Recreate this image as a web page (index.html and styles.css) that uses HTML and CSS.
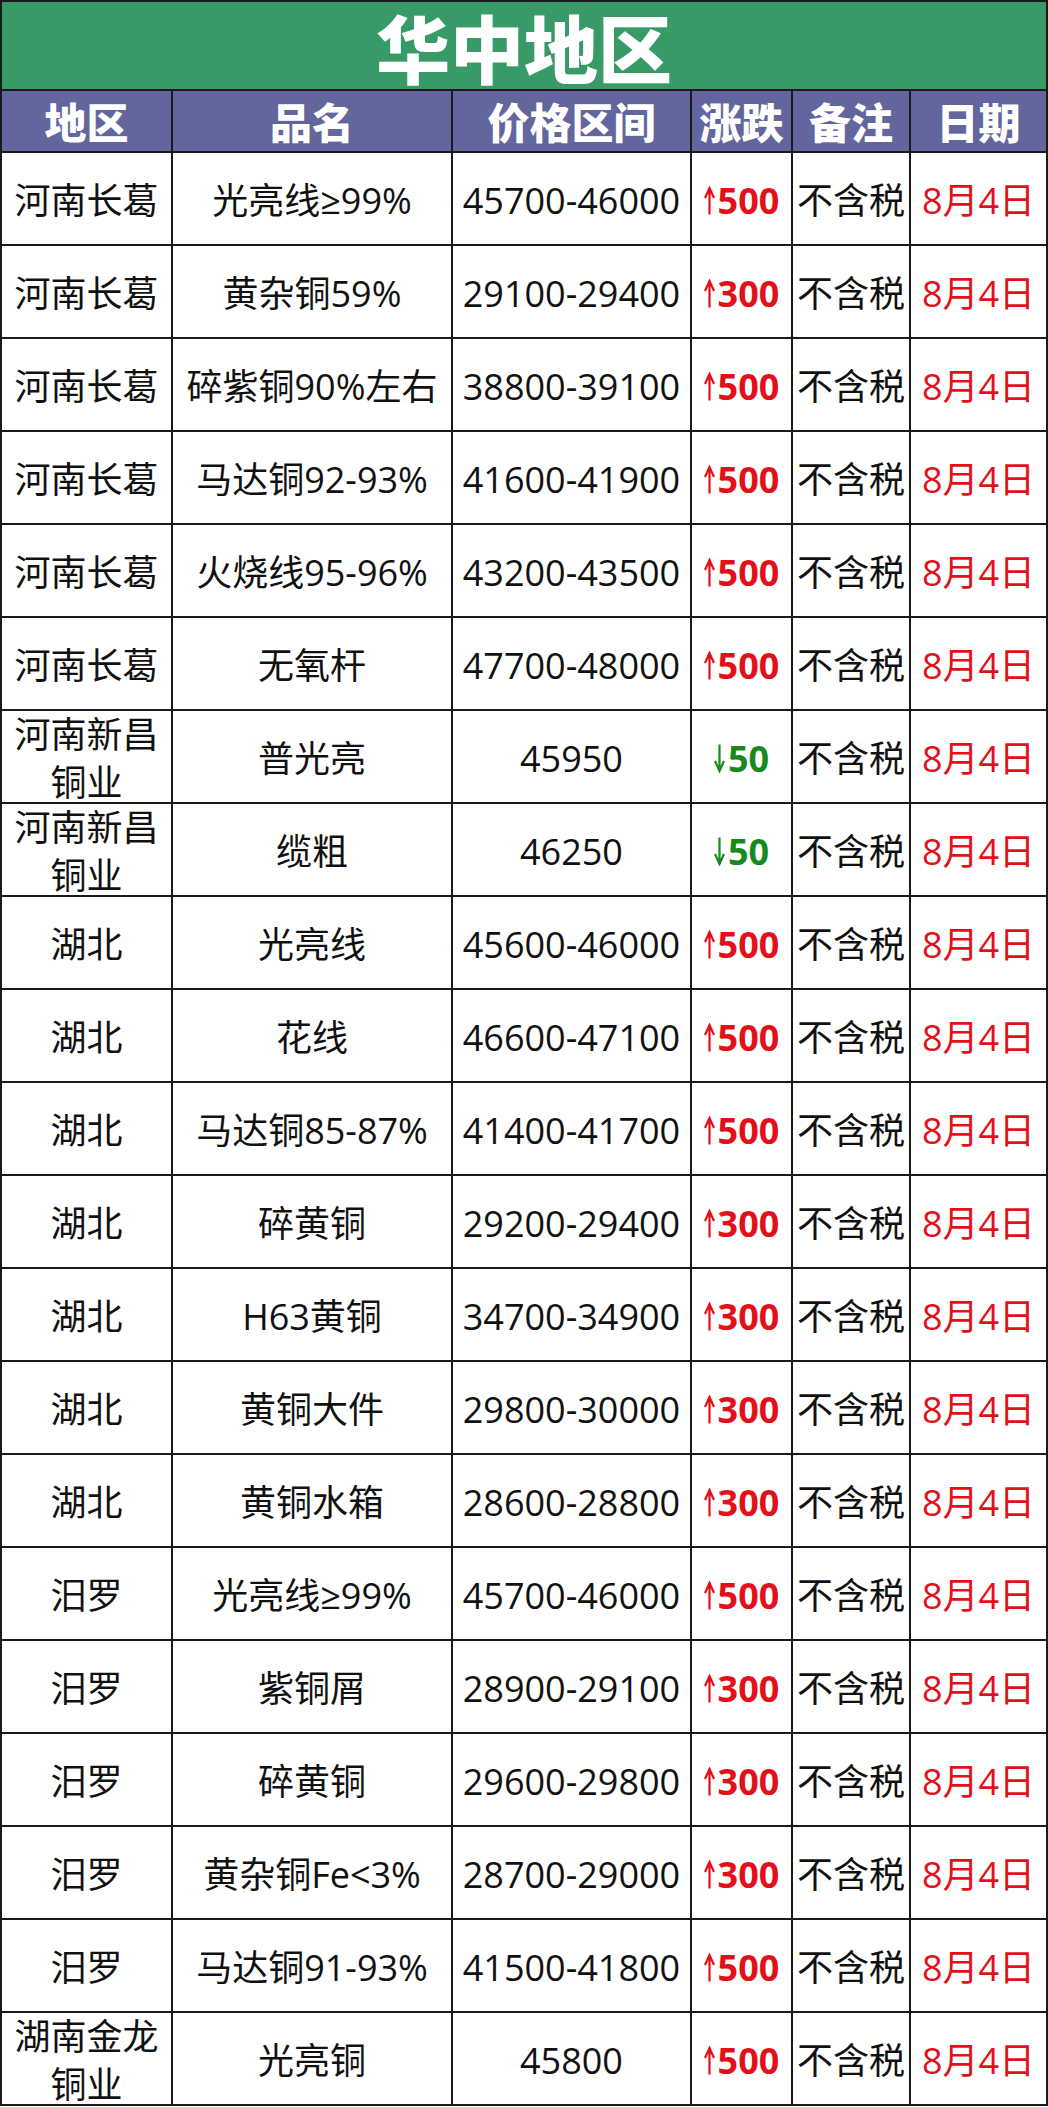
FILE: index.html
```html
<!DOCTYPE html>
<html lang="zh-CN">
<head>
<meta charset="utf-8">
<title>华中地区</title>
<link rel="stylesheet" href="styles.css">
</head>
<body>
<svg width="0" height="0" class="defs" aria-hidden="true">
  <defs>
    <symbol id="up" viewBox="0 0 11 29"><path d="M5.5 28.5V3.5M1 12L5.5 2L10 12" fill="none" stroke="currentColor" stroke-width="2.2" stroke-linejoin="miter"/></symbol>
    <symbol id="down" viewBox="0 0 11 29"><path d="M5.5 0.5V25.5M1 17L5.5 27L10 17" fill="none" stroke="currentColor" stroke-width="2.2" stroke-linejoin="miter"/></symbol>
  </defs>
</svg>
<div class="sheet">
  <div class="title">华中地区</div>

  <div class="th">地区</div><div class="th">品名</div><div class="th">价格区间</div><div class="th">涨跌</div><div class="th">备注</div><div class="th">日期</div>

  <div class="td">河南长葛</div><div class="td">光亮线≥99%</div><div class="td">45700-46000</div><div class="td up"><svg class="ar"><use href="#up"/></svg>500</div><div class="td">不含税</div><div class="td date">8月4日</div>
  <div class="td">河南长葛</div><div class="td">黄杂铜59%</div><div class="td">29100-29400</div><div class="td up"><svg class="ar"><use href="#up"/></svg>300</div><div class="td">不含税</div><div class="td date">8月4日</div>
  <div class="td">河南长葛</div><div class="td">碎紫铜90%左右</div><div class="td">38800-39100</div><div class="td up"><svg class="ar"><use href="#up"/></svg>500</div><div class="td">不含税</div><div class="td date">8月4日</div>
  <div class="td">河南长葛</div><div class="td">马达铜92-93%</div><div class="td">41600-41900</div><div class="td up"><svg class="ar"><use href="#up"/></svg>500</div><div class="td">不含税</div><div class="td date">8月4日</div>
  <div class="td">河南长葛</div><div class="td">火烧线95-96%</div><div class="td">43200-43500</div><div class="td up"><svg class="ar"><use href="#up"/></svg>500</div><div class="td">不含税</div><div class="td date">8月4日</div>
  <div class="td">河南长葛</div><div class="td">无氧杆</div><div class="td">47700-48000</div><div class="td up"><svg class="ar"><use href="#up"/></svg>500</div><div class="td">不含税</div><div class="td date">8月4日</div>
  <div class="td two">河南新昌<br>铜业</div><div class="td">普光亮</div><div class="td">45950</div><div class="td down"><svg class="ar"><use href="#down"/></svg>50</div><div class="td">不含税</div><div class="td date">8月4日</div>
  <div class="td two">河南新昌<br>铜业</div><div class="td">缆粗</div><div class="td">46250</div><div class="td down"><svg class="ar"><use href="#down"/></svg>50</div><div class="td">不含税</div><div class="td date">8月4日</div>
  <div class="td">湖北</div><div class="td">光亮线</div><div class="td">45600-46000</div><div class="td up"><svg class="ar"><use href="#up"/></svg>500</div><div class="td">不含税</div><div class="td date">8月4日</div>
  <div class="td">湖北</div><div class="td">花线</div><div class="td">46600-47100</div><div class="td up"><svg class="ar"><use href="#up"/></svg>500</div><div class="td">不含税</div><div class="td date">8月4日</div>
  <div class="td">湖北</div><div class="td">马达铜85-87%</div><div class="td">41400-41700</div><div class="td up"><svg class="ar"><use href="#up"/></svg>500</div><div class="td">不含税</div><div class="td date">8月4日</div>
  <div class="td">湖北</div><div class="td">碎黄铜</div><div class="td">29200-29400</div><div class="td up"><svg class="ar"><use href="#up"/></svg>300</div><div class="td">不含税</div><div class="td date">8月4日</div>
  <div class="td">湖北</div><div class="td">H63黄铜</div><div class="td">34700-34900</div><div class="td up"><svg class="ar"><use href="#up"/></svg>300</div><div class="td">不含税</div><div class="td date">8月4日</div>
  <div class="td">湖北</div><div class="td">黄铜大件</div><div class="td">29800-30000</div><div class="td up"><svg class="ar"><use href="#up"/></svg>300</div><div class="td">不含税</div><div class="td date">8月4日</div>
  <div class="td">湖北</div><div class="td">黄铜水箱</div><div class="td">28600-28800</div><div class="td up"><svg class="ar"><use href="#up"/></svg>300</div><div class="td">不含税</div><div class="td date">8月4日</div>
  <div class="td">汨罗</div><div class="td">光亮线≥99%</div><div class="td">45700-46000</div><div class="td up"><svg class="ar"><use href="#up"/></svg>500</div><div class="td">不含税</div><div class="td date">8月4日</div>
  <div class="td">汨罗</div><div class="td">紫铜屑</div><div class="td">28900-29100</div><div class="td up"><svg class="ar"><use href="#up"/></svg>300</div><div class="td">不含税</div><div class="td date">8月4日</div>
  <div class="td">汨罗</div><div class="td">碎黄铜</div><div class="td">29600-29800</div><div class="td up"><svg class="ar"><use href="#up"/></svg>300</div><div class="td">不含税</div><div class="td date">8月4日</div>
  <div class="td">汨罗</div><div class="td">黄杂铜Fe&lt;3%</div><div class="td">28700-29000</div><div class="td up"><svg class="ar"><use href="#up"/></svg>300</div><div class="td">不含税</div><div class="td date">8月4日</div>
  <div class="td">汨罗</div><div class="td">马达铜91-93%</div><div class="td">41500-41800</div><div class="td up"><svg class="ar"><use href="#up"/></svg>500</div><div class="td">不含税</div><div class="td date">8月4日</div>
  <div class="td two">湖南金龙<br>铜业</div><div class="td">光亮铜</div><div class="td">45800</div><div class="td up"><svg class="ar"><use href="#up"/></svg>500</div><div class="td">不含税</div><div class="td date">8月4日</div>
</div>
</body>
</html>
```

FILE: styles.css
```css
html, body {
  margin: 0;
  padding: 0;
  background: #ffffff;
}

.defs {
  position: absolute;
  width: 0;
  height: 0;
  overflow: hidden;
}

.sheet {
  width: 1048px;
  box-sizing: border-box;
  display: grid;
  grid-template-columns: 171px 280px 239px 101px 118px 137px;
  border-left: 2px solid #1a1a1a;
  border-top: 2px solid #1a1a1a;
  font-family: "Open Sans", "Noto Sans CJK SC", sans-serif;
  color: #111111;
}

.title {
  grid-column: 1 / -1;
  height: 89px;
  box-sizing: border-box;
  border-right: 2px solid #1a1a1a;
  border-bottom: 2px solid #1a1a1a;
  background: #389b67;
  color: #ffffff;
  font-family: "Noto Sans CJK SC", sans-serif;
  font-weight: 900;
  font-size: 74px;
  line-height: 80px;
  display: flex;
  align-items: center;
  justify-content: center;
}

.th {
  height: 62px;
  box-sizing: border-box;
  border-right: 2px solid #1a1a1a;
  border-bottom: 2px solid #1a1a1a;
  background: #63659d;
  color: #ffffff;
  font-family: "Noto Sans CJK SC", sans-serif;
  font-weight: 900;
  font-size: 42px;
  line-height: 54px;
  display: flex;
  align-items: center;
  justify-content: center;
}

.td {
  height: 93px;
  box-sizing: border-box;
  border-right: 2px solid #1a1a1a;
  border-bottom: 2px solid #1a1a1a;
  font-size: 36px;
  line-height: 50px;
  display: flex;
  align-items: center;
  justify-content: center;
  text-align: center;
  white-space: nowrap;
  overflow: hidden;
  padding-top: 4px;
}

.td.two {
  display: block;
  padding-top: 0;
  line-height: 48px;
}

.up {
  color: #e3101a;
  font-weight: 700;
}

.down {
  color: #178a1e;
  font-weight: 700;
}

.ar {
  width: 11px;
  height: 29px;
  margin-right: 3px;
  vertical-align: -1px;
}

.date {
  color: #e3101a;
}
```
